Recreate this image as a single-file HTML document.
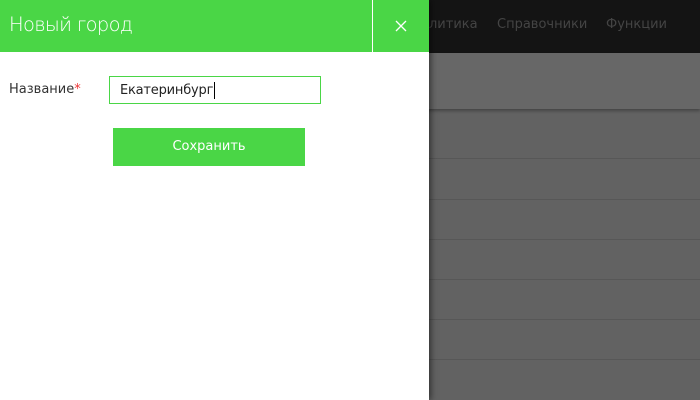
<!DOCTYPE html>
<html><head><meta charset="utf-8"><style>
body{margin:0;width:700px;height:400px;overflow:hidden;position:relative;font-family:"Liberation Sans","DejaVu Sans",sans-serif;background:#626262}
.nav{position:absolute;left:0;top:0;width:700px;height:53px;background:#141414}
.nav span{position:absolute;top:17px;font-size:13px;color:#444;font-family:"DejaVu Sans",sans-serif}
.band{position:absolute;left:0;top:53px;width:700px;height:56px;background:#676767;box-shadow:0 2px 3px rgba(0,0,0,.3)}
.line{position:absolute;left:429px;width:271px;height:1px;background:#575757}
.panel{position:absolute;left:0;top:0;width:429px;height:400px;background:#fff;box-shadow:2px 0 6px rgba(0,0,0,.5)}
.hdr{position:absolute;left:0;top:0;width:429px;height:52px;background:#4ad646}
.hdr .t{position:absolute;left:9px;top:13px;font-size:19.5px;letter-spacing:-0.7px;color:#fff;font-family:"DejaVu Sans",sans-serif;font-weight:300}
.div{position:absolute;left:372px;top:0;width:1px;height:52px;background:#fff}
.lbl{position:absolute;left:9px;top:82px;font-size:13px;color:#333;font-family:"DejaVu Sans",sans-serif}
.lbl b{color:#e33;font-weight:normal}
.inp{position:absolute;left:109px;top:76px;width:210px;height:26px;border:1px solid #4ad646;box-sizing:content-box}
.inp span{position:absolute;left:10px;top:6px;font-size:13px;letter-spacing:-0.2px;color:#222;font-family:"DejaVu Sans",sans-serif}
.btn{position:absolute;left:113px;top:128px;width:192px;height:38px;background:#4ad646;color:#fff;font-size:13px;text-align:center;line-height:38px;font-family:"DejaVu Sans",sans-serif}
</style></head><body>
<div class="nav"><span style="left:429px">литика</span><span style="left:497px">Справочники</span><span style="left:606px">Функции</span></div>
<div class="band"></div>
<div class="line" style="top:158px"></div><div class="line" style="top:199px"></div><div class="line" style="top:239px"></div><div class="line" style="top:279px"></div><div class="line" style="top:319px"></div><div class="line" style="top:359px"></div>
<div class="panel">
<div class="hdr"><div class="t">Новый город</div><div class="div"></div>
<svg style="position:absolute;left:395px;top:20px" width="12" height="12"><path d="M1 1L11 11M11 1L1 11" stroke="#fff" stroke-width="1.3"/></svg></div>
<div class="lbl">Название<b>*</b></div>
<div class="inp"><span>Екатеринбург</span><div style="position:absolute;left:104px;top:5px;width:1px;height:17px;background:#000"></div></div>
<div class="btn">Сохранить</div>
</div>
</body></html>
